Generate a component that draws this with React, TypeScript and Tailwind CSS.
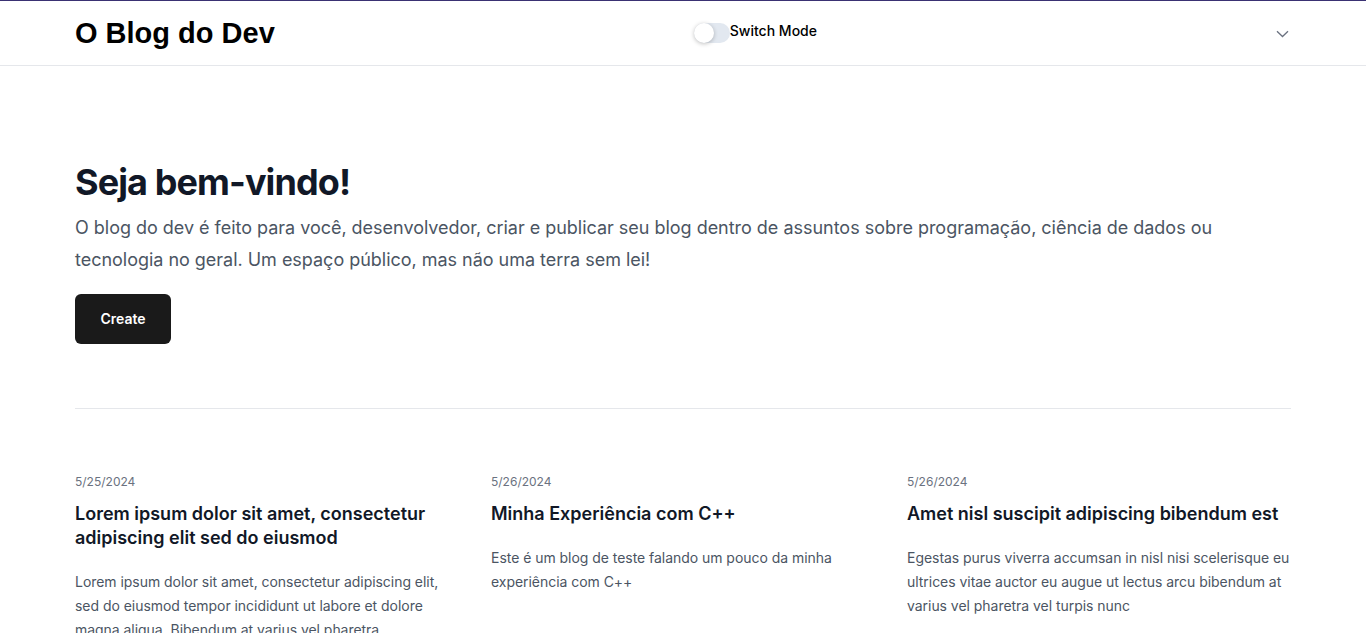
import React from "react";

const posts = [
  {
    date: "5/25/2024",
    title: "Lorem ipsum dolor sit amet, consectetur adipiscing elit sed do eiusmod",
    desc: "Lorem ipsum dolor sit amet, consectetur adipiscing elit, sed do eiusmod tempor incididunt ut labore et dolore magna aliqua. Bibendum at varius vel pharetra",
  },
  {
    date: "5/26/2024",
    title: "Minha Experiência com C++",
    desc: "Este é um blog de teste falando um pouco da minha experiência com C++",
  },
  {
    date: "5/26/2024",
    title: "Amet nisl suscipit adipiscing bibendum est",
    desc: "Egestas purus viverra accumsan in nisl nisi scelerisque eu ultrices vitae auctor eu augue ut lectus arcu bibendum at varius vel pharetra vel turpis nunc",
  },
];

export default function App() {
  return (
    <div className="min-h-screen bg-white font-['Inter',sans-serif]">
      <div className="h-px bg-[#3a3173]" />
      <header className="border-b border-[#e5e7eb]">
        <div className="mx-auto flex h-16 max-w-7xl items-center justify-between px-8">
          <a className="mt-[2px] font-['Liberation_Sans',Arial,sans-serif] text-[29px] font-bold text-black">
            O Blog do Dev
          </a>
          <div className="flex items-center pr-[40px]">
            <div className="relative h-[20px] w-[36px] rounded-full bg-[#e2e8f0]">
              <div className="absolute left-0 top-0 h-[20px] w-[20px] rounded-full bg-white shadow-[0_1px_4px_rgba(0,0,0,0.25)]" />
            </div>
            <span className="-mt-[4px] text-sm font-medium text-black">Switch Mode</span>
          </div>
          <button className="mr-[2px] mt-[1px] text-[#6b7280]">
            <svg width="13" height="8" viewBox="0 0 13 8" fill="none">
              <path d="M1 1.2L6.5 6.5L12 1.2" stroke="currentColor" strokeWidth="1.3" />
            </svg>
          </button>
        </div>
      </header>

      <main className="mx-auto max-w-7xl px-8">
        <section className="pt-[96px]">
          <h1 className="text-4xl font-bold tracking-tight text-[#111827]">Seja bem-vindo!</h1>
          <p className="mt-[10px] text-lg leading-8 tracking-[-0.02px] text-[#4b5563]">
            O blog do dev é feito para você, desenvolvedor, criar e publicar seu blog dentro de assuntos sobre programação, ciência de dados ou tecnologia no geral. Um espaço público, mas não uma terra sem lei!
          </p>
          <button className="mt-[18px] h-[50px] w-[96px] rounded-md bg-[#1a1a1a] text-sm font-semibold text-white">
            Create
          </button>
        </section>

        <div className="mt-16 grid grid-cols-3 gap-x-8 border-t border-[#e5e7eb] pt-[65px]">
          {posts.map((p, i) => (
            <article key={i} className="flex flex-col">
              <time className="text-xs leading-4 text-[#6b7280]">{p.date}</time>
              <h3 className="mt-3 text-lg font-semibold leading-6 text-[#111827]">{p.title}</h3>
              <p className="mt-5 text-sm leading-6 tracking-[-0.04px] text-[#4b5563]">{p.desc}</p>
            </article>
          ))}
        </div>
      </main>
    </div>
  );
}
